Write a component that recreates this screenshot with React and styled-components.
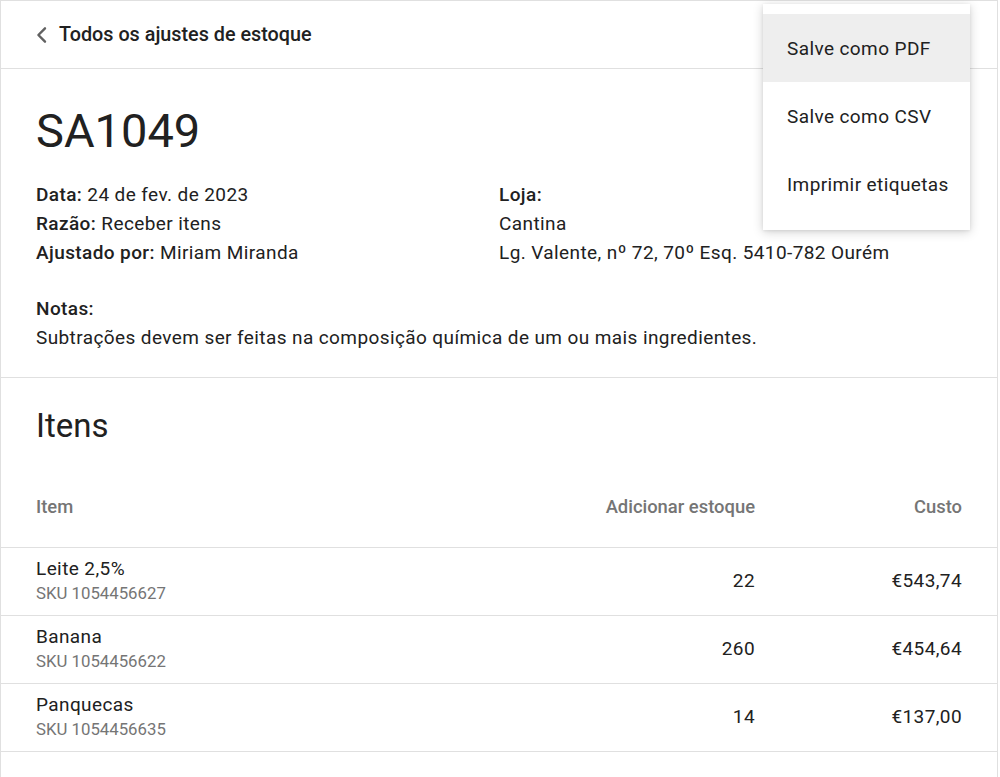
import React from "react";
import styled, { createGlobalStyle } from "styled-components";

const Global = createGlobalStyle`
  html, body { margin: 0; padding: 0; background: #ffffff; }
  body { font-family: Roboto, "Noto Sans", Arial, sans-serif; color: #212121; }
  * { box-sizing: border-box; }
`;

const Card = styled.div`
  position: relative;
  width: 998px;
  border: 1px solid #e0e0e0;
  border-bottom: none;
  background: #fff;
`;

const Header = styled.header`
  height: 68px;
  border-bottom: 1px solid #e0e0e0;
  display: flex;
  align-items: center;
  padding-left: 34px;
`;

const BackLink = styled.a`
  display: flex;
  align-items: center;
  gap: 11px;
  font-size: 19.8px;
  font-weight: 500;
  color: #212121;
  text-decoration: none;
  cursor: pointer;
`;

const Section = styled.section`
  padding: ${(p) => p.$pad};
  border-bottom: ${(p) => (p.$border ? "1px solid #e0e0e0" : "none")};
`;

const Title = styled.h1`
  margin: 0;
  font-size: 47px;
  font-weight: 400;
  line-height: 55px;
  color: #212121;
`;

const Details = styled.div`
  display: grid;
  grid-template-columns: 1fr 1fr;
  margin-top: 23px;
  font-size: 19px;
  letter-spacing: 0.4px;
  line-height: 28.8px;
`;

const Line = styled.div``;

const Label = styled.span`
  font-weight: 500;
`;

const Notes = styled.div`
  margin-top: 28px;
  font-size: 19px;
  letter-spacing: 0.4px;
  line-height: 28.8px;
`;

const SectionTitle = styled.h2`
  margin: 0;
  font-size: 33px;
  font-weight: 400;
  line-height: 40px;
`;

const Row = styled.div`
  display: grid;
  grid-template-columns: 1fr 240px 207px;
  align-items: ${(p) => (p.$head ? "start" : "center")};
  margin: 0 -35px;
  padding: ${(p) => (p.$head ? "47px 35px 25px" : "0 35px")};
  height: ${(p) => (p.$head ? "auto" : "68px")};
  border-bottom: 1px solid #e0e0e0;
`;

const HeadCell = styled.div`
  font-size: 18.4px;
  line-height: 28.8px;
  font-weight: 500;
  color: #757575;
  text-align: ${(p) => (p.$right ? "right" : "left")};
`;

const Cell = styled.div`
  font-size: 19px;
  letter-spacing: 0.4px;
  line-height: 24px;
  color: #212121;
  text-align: ${(p) => (p.$right ? "right" : "left")};
`;

const ItemName = styled.div`
  font-size: 19px;
  letter-spacing: 0.4px;
  line-height: 24px;
`;

const Sku = styled.div`
  font-size: 16.8px;
  letter-spacing: 0;
  line-height: 24px;
  color: #757575;
`;

const Menu = styled.ul`
  position: absolute;
  top: 3px;
  left: 762px;
  width: 207px;
  margin: 0;
  padding: 10px 0 12px;
  list-style: none;
  background: #fff;
  box-shadow: 0 2px 10px rgba(0, 0, 0, 0.18), 0 1px 3px rgba(0, 0, 0, 0.08);
`;

const MenuItem = styled.li`
  height: 68px;
  display: flex;
  align-items: center;
  padding: 0 0 0 24px;
  white-space: nowrap;
  font-size: 19px;
  letter-spacing: 0.4px;
  color: #212121;
  background: ${(p) => (p.$active ? "#eeeeee" : "transparent")};
  cursor: pointer;
`;

const BottomSpace = styled.div`
  height: 40px;
`;

const items = [
  { name: "Leite 2,5%", sku: "SKU 1054456627", qty: "22", cost: "€543,74" },
  { name: "Banana", sku: "SKU 1054456622", qty: "260", cost: "€454,64" },
  { name: "Panquecas", sku: "SKU 1054456635", qty: "14", cost: "€137,00" },
];

function Chevron() {
  return (
    <svg width="13" height="18" viewBox="0 0 13 18" fill="none">
      <path
        d="M10 2.3 L3.4 9 L10 15.7"
        stroke="#616161"
        strokeWidth="2.4"
        strokeLinecap="round"
        strokeLinejoin="round"
      />
    </svg>
  );
}

export default function App() {
  return (
    <>
      <Global />
      <Card>
        <Header>
          <BackLink>
            <Chevron />
            Todos os ajustes de estoque
          </BackLink>
        </Header>

        <Section $pad="34px 35px 24px" $border>
          <Title>SA1049</Title>
          <Details>
            <div>
              <Line>
                <Label>Data:</Label> 24 de fev. de 2023
              </Line>
              <Line>
                <Label>Razão:</Label> Receber itens
              </Line>
              <Line>
                <Label>Ajustado por:</Label> Miriam Miranda
              </Line>
            </div>
            <div>
              <Line>
                <Label>Loja:</Label>
              </Line>
              <Line>Cantina</Line>
              <Line>Lg. Valente, nº 72, 70º Esq. 5410-782 Ourém</Line>
            </div>
          </Details>
          <Notes>
            <Label>Notas:</Label>
            <div>
              Subtrações devem ser feitas na composição química de um ou mais
              ingredientes.
            </div>
          </Notes>
        </Section>

        <Section $pad="28px 35px 0">
          <SectionTitle>Itens</SectionTitle>
          <Row $head>
            <HeadCell>Item</HeadCell>
            <HeadCell $right>Adicionar estoque</HeadCell>
            <HeadCell $right>Custo</HeadCell>
          </Row>
          {items.map((it) => (
            <Row key={it.sku}>
              <Cell>
                <ItemName>{it.name}</ItemName>
                <Sku>{it.sku}</Sku>
              </Cell>
              <Cell $right>{it.qty}</Cell>
              <Cell $right>{it.cost}</Cell>
            </Row>
          ))}
          <BottomSpace />
        </Section>

        <Menu>
          <MenuItem $active>Salve como PDF</MenuItem>
          <MenuItem>Salve como CSV</MenuItem>
          <MenuItem>Imprimir etiquetas</MenuItem>
        </Menu>
      </Card>
    </>
  );
}
